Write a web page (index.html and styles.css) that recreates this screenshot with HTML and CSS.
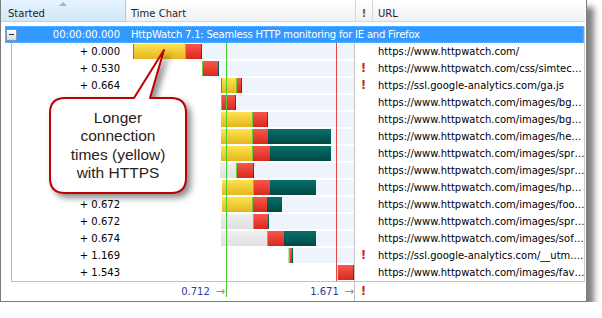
FILE: index.html
```html
<!DOCTYPE html>
<html lang="en">
<head>
  <meta charset="UTF-8" />
  <title>HttpWatch Time Chart</title>
  <link rel="stylesheet" href="styles.css">
</head>
<body>
  <div class="window">
    <div class="head">
      <div class="hcell started">Started<span class="sort"></span></div>
      <div class="hcell">Time Chart</div>
      <div class="hcell warn">!</div>
      <div class="hcell">URL</div>
    </div>

    <div class="grid">
      <div class="page-row">
        <div class="page-time"><span class="expander"></span>00:00:00.000</div>
        <div class="page-title">HttpWatch 7.1: Seamless HTTP monitoring for IE and Firefox</div>
      </div>

      <div class="list">
        <div class="row">
          <div class="time">+ 0.000</div>
          <div class="chart"><div class="track" style="margin-left:8px"><i class="p" style="width:1px"></i><i class="y" style="width:51px"></i><i class="g" style="width:1px"></i><i class="r" style="width:15px"></i><i class="t" style="width:1px"></i></div></div>
          <div class="flag"></div>
          <div class="url">https://www.httpwatch.com/</div>
        </div>
        <div class="row">
          <div class="time">+ 0.530</div>
          <div class="chart"><div class="track" style="margin-left:77px"><i class="g" style="width:1px"></i><i class="r" style="width:15px"></i><i class="t" style="width:1px"></i></div></div>
          <div class="flag">!</div>
          <div class="url">https://www.httpwatch.com/css/simtec…</div>
        </div>
        <div class="row">
          <div class="time">+ 0.664</div>
          <div class="chart"><div class="track" style="margin-left:96px"><i class="p" style="width:1px"></i><i class="y" style="width:14px"></i><i class="g" style="width:1px"></i><i class="r" style="width:4px"></i><i class="t" style="width:1px"></i></div></div>
          <div class="flag">!</div>
          <div class="url">https://ssl.google-analytics.com/ga.js</div>
        </div>
        <!-- start times of the next rows sit under the callout -->
        <div class="row">
          <div class="time"></div>
          <div class="chart"><div class="track" style="margin-left:96px"><i class="g" style="width:1px"></i><i class="r" style="width:13px"></i><i class="t" style="width:1px"></i></div></div>
          <div class="flag"></div>
          <div class="url">https://www.httpwatch.com/images/bg…</div>
        </div>
        <div class="row">
          <div class="time"></div>
          <div class="chart"><div class="track" style="margin-left:96px"><i class="y" style="width:31px"></i><i class="g" style="width:1px"></i><i class="r" style="width:14px"></i><i class="t" style="width:1px"></i></div></div>
          <div class="flag"></div>
          <div class="url">https://www.httpwatch.com/images/bg…</div>
        </div>
        <div class="row">
          <div class="time"></div>
          <div class="chart"><div class="track" style="margin-left:96px"><i class="y" style="width:31px"></i><i class="g" style="width:1px"></i><i class="r" style="width:15px"></i><i class="t" style="width:63px"></i></div></div>
          <div class="flag"></div>
          <div class="url">https://www.httpwatch.com/images/he…</div>
        </div>
        <div class="row">
          <div class="time"></div>
          <div class="chart"><div class="track" style="margin-left:96px"><i class="y" style="width:31px"></i><i class="g" style="width:1px"></i><i class="r" style="width:17px"></i><i class="t" style="width:61px"></i></div></div>
          <div class="flag"></div>
          <div class="url">https://www.httpwatch.com/images/spr…</div>
        </div>
        <div class="row">
          <div class="time"></div>
          <div class="chart"><div class="track" style="margin-left:95px"><i class="k" style="width:16px"></i><i class="g" style="width:1px"></i><i class="r" style="width:16px"></i><i class="t" style="width:1px"></i></div></div>
          <div class="flag"></div>
          <div class="url">https://www.httpwatch.com/images/spr…</div>
        </div>
        <div class="row">
          <div class="time"></div>
          <div class="chart"><div class="track" style="margin-left:97px"><i class="y" style="width:31px"></i><i class="g" style="width:1px"></i><i class="r" style="width:16px"></i><i class="t" style="width:46px"></i></div></div>
          <div class="flag"></div>
          <div class="url">https://www.httpwatch.com/images/hp…</div>
        </div>
        <div class="row">
          <div class="time">+ 0.672</div>
          <div class="chart"><div class="track" style="margin-left:97px"><i class="y" style="width:30px"></i><i class="g" style="width:1px"></i><i class="r" style="width:14px"></i><i class="t" style="width:15px"></i></div></div>
          <div class="flag"></div>
          <div class="url">https://www.httpwatch.com/images/foo…</div>
        </div>
        <div class="row">
          <div class="time">+ 0.672</div>
          <div class="chart"><div class="track" style="margin-left:96px"><i class="k" style="width:32px"></i><i class="g" style="width:1px"></i><i class="r" style="width:14px"></i><i class="t" style="width:1px"></i></div></div>
          <div class="flag"></div>
          <div class="url">https://www.httpwatch.com/images/spr…</div>
        </div>
        <div class="row">
          <div class="time">+ 0.674</div>
          <div class="chart"><div class="track" style="margin-left:96px"><i class="k" style="width:46px"></i><i class="g" style="width:1px"></i><i class="r" style="width:16px"></i><i class="t" style="width:32px"></i></div></div>
          <div class="flag"></div>
          <div class="url">https://www.httpwatch.com/images/sof…</div>
        </div>
        <div class="row">
          <div class="time">+ 1.169</div>
          <div class="chart"><div class="track" style="margin-left:163px"><i class="l" style="width:1px"></i><i class="g" style="width:1px"></i><i class="r" style="width:2px"></i><i class="t" style="width:1px"></i></div></div>
          <div class="flag">!</div>
          <div class="url">https://ssl.google-analytics.com/__utm.…</div>
        </div>
        <div class="row">
          <div class="time">+ 1.543</div>
          <div class="chart"><div class="track" style="margin-left:212px"><i class="l" style="width:1px"></i><i class="r" style="width:15px"></i><i class="t" style="width:1px"></i></div></div>
          <div class="flag"></div>
          <div class="url">https://www.httpwatch.com/images/fav…</div>
        </div>
      </div>
    </div>

    <div class="foot">
      <div></div>
      <div class="chart">
        <div class="mark first">0.712<span class="arrow">→</span></div>
        <div class="mark">1.671<span class="arrow">→</span></div>
      </div>
      <div class="flag">!</div>
      <div></div>
    </div>

    <!-- render start / page load lines drawn over the chart -->
    <div class="line render"></div>
    <div class="line load"></div>

    <div class="callout">
      <svg width="160" height="165" viewBox="40 40 160 165">
        <path d="M65 98 H134 L164 50 L150 98 H171 Q186 98 186 113 V178 Q186 193 171 193 H65 Q50 193 50 178 V113 Q50 98 65 98 Z"
              fill="#fff" stroke="#c00000" stroke-width="2" stroke-linejoin="round"/>
      </svg>
      <div class="callout-text">Longer<br>connection<br>times (yellow)<br>with HTTPS</div>
    </div>
  </div>
</body>
</html>
```

FILE: styles.css
```css
* {
  margin: 0;
  padding: 0;
  box-sizing: border-box;
}
body {
  background: #fff;
  color: #000;
  font-family: "DejaVu Sans", Verdana, sans-serif;
  font-size: 10px;
}
.window {
  position: relative;
  width: 587px;
  height: 302px;
  border: 1px solid #7b7b7b;
  border-top: none;
  padding-right: 1px;
  box-shadow: 7px 7px 6px rgba(0, 0, 0, 0.5);
  background: #fff;
}

/* column headers */
.head {
  display: grid;
  grid-template-columns: 125px 230px 17px 1fr;
  height: 22px;
}
.hcell {
  position: relative;
  padding: 6px 0 0 5px;
  line-height: 15px;
  color: #1e1e1e;
  background: linear-gradient(#fff, #eff1f4);
  border-right: 1px solid #d6d6d6;
  border-bottom: 1px solid #d6d6d6;
  white-space: nowrap;
}
.hcell:last-child {
  border-right: none;
}
.hcell.started {
  padding-left: 7px;
  background: linear-gradient(#e6f3fd, #d2e8fa);
  border-right-color: #a9c9e4;
  border-bottom-color: #b9d4ea;
}
.hcell.warn {
  padding-left: 0;
  text-align: center;
  font-weight: bold;
  color: #555;
}
.sort {
  position: absolute;
  left: 58px;
  top: 2px;
  border-left: 4px solid transparent;
  border-right: 4px solid transparent;
  border-bottom: 4px solid #9db7cf;
}

/* list area */
.grid {
  margin-top: 4px;
  border-right: 1px solid #cdcdcd;
}
.page-row {
  display: grid;
  grid-template-columns: 119px 1fr;
  height: 17px;
  margin-left: 4px;
  line-height: 15px;
  color: #fff;
  background: #3399ff;
  border: 1px dotted #e0a868;
  white-space: nowrap;
}
.page-time {
  display: flex;
  justify-content: space-between;
  align-items: center;
  padding-right: 5px;
}
.page-title {
  padding-left: 6px;
  letter-spacing: -0.2px;
}
.expander {
  position: relative;
  width: 11px;
  height: 12px;
  margin-top: 1px;
  border: 1px solid #8496ad;
  background: linear-gradient(#fff, #d3dbe4);
}
.expander::after {
  content: "";
  position: absolute;
  left: 2px;
  right: 2px;
  top: 4px;
  height: 1px;
  background: #1b2d60;
}
.list {
  margin-left: 10px;
  border-left: 1px solid #b9b9b9;
  border-bottom: 1px solid #c3c3c3;
}
.row {
  display: grid;
  grid-template-columns: 113px 230px 17px 1fr;
  height: 17px;
  line-height: 17px;
  white-space: nowrap;
}
.time {
  text-align: right;
  padding-right: 5px;
}
.chart {
  border-right: 1px solid #c3c3c3;
}
.flag {
  text-align: center;
  font-weight: bold;
  font-size: 12px;
  color: #c62a22;
}
.url {
  padding-left: 6px;
  overflow: hidden;
}

/* waterfall bars */
.track {
  display: flex;
  height: 15px;
  margin-top: 1px;
  background: #eff4fc;
}
.track i {
  display: block;
  height: 100%;
  flex-shrink: 0;
}
.track .p { background: #b34ad6; }
.track .y { background: linear-gradient(#fce34e, #e6b51e); }
.track .g { background: #5fd23a; }
.track .l { background: #b7ea9c; }
.track .r { background: linear-gradient(#f7574a, #d9291d); }
.track .t { background: linear-gradient(#06706b, #004845); }
.track .k { background: linear-gradient(#efefef, #e0e0e0); }

/* summary row */
.foot {
  display: grid;
  grid-template-columns: 124px 230px 17px 1fr;
  height: 19px;
  line-height: 19px;
  color: #2a3d96;
}
.foot .chart {
  display: flex;
}
.mark {
  flex: 1;
  text-align: right;
  white-space: nowrap;
}
.mark.first {
  flex: 0 0 101px;
  padding-right: 1px;
}
.arrow {
  margin-left: 6px;
  font-size: 11px;
  color: #8c8c8c;
}

.line {
  position: absolute;
  top: 43px;
  width: 1px;
  z-index: 2;
}
.line.render {
  left: 225px;
  height: 254px;
  background: #45cf2c;
}
.line.load {
  left: 335px;
  height: 238px;
  background: #e04a48;
}

/* annotation bubble */
.callout {
  position: absolute;
  left: 39px;
  top: 40px;
  width: 160px;
  height: 165px;
  z-index: 3;
}
.callout svg {
  display: block;
  filter: drop-shadow(4px 4px 3px rgba(0, 0, 0, 0.45));
}
.callout-text {
  position: absolute;
  left: 10px;
  top: 58px;
  width: 136px;
  height: 95px;
  display: flex;
  align-items: center;
  justify-content: center;
  text-align: center;
  font-family: "Liberation Sans", Arial, sans-serif;
  font-size: 15.5px;
  line-height: 18.5px;
  color: #2b2218;
}
```
